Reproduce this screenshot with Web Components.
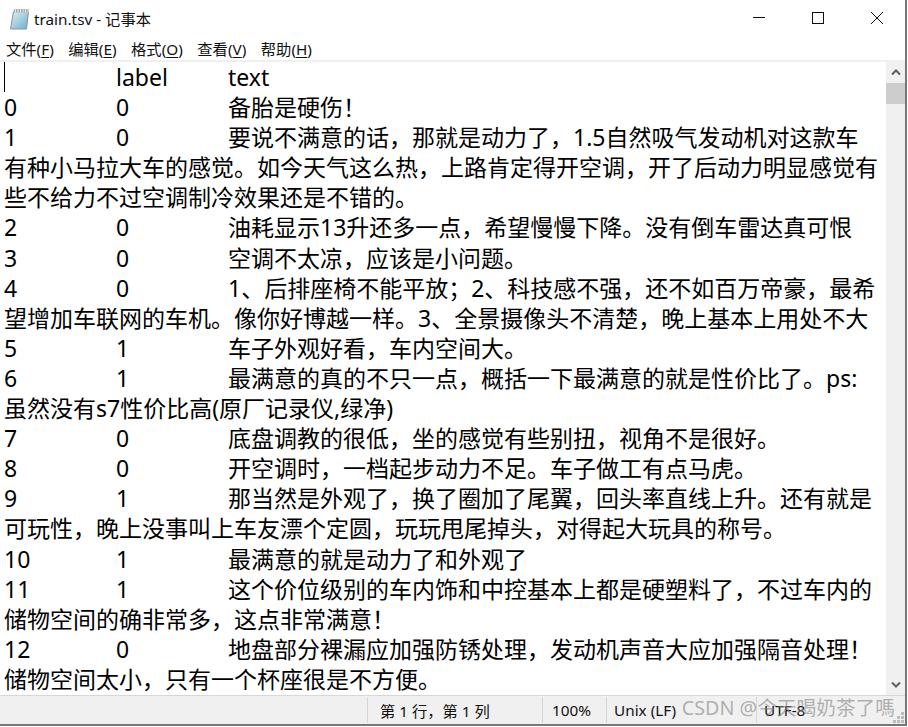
<!DOCTYPE html>
<html>
<head>
<meta charset="utf-8">
<title>train.tsv - 记事本</title>
<style>
  html, body { margin: 0; padding: 0; background: #fff; }
</style>
</head>
<body>
<note-window>
  <note-titlebar>train.tsv - 记事本</note-titlebar>
  <note-menubar>
    <note-menu key="F">文件</note-menu>
    <note-menu key="E">编辑</note-menu>
    <note-menu key="O">格式</note-menu>
    <note-menu key="V">查看</note-menu>
    <note-menu key="H">帮助</note-menu>
  </note-menubar>
  <note-editor>
    <div>&#9;label&#9;text</div>
    <div>0&#9;0&#9;备胎是硬伤！</div>
    <div>1&#9;0&#9;要说不满意的话，那就是动力了，1.5自然吸气发动机对这款车</div>
    <div>有种小马拉大车的感觉。如今天气这么热，上路肯定得开空调，开了后动力明显感觉有</div>
    <div>些不给力不过空调制冷效果还是不错的。</div>
    <div>2&#9;0&#9;油耗显示13升还多一点，希望慢慢下降。没有倒车雷达真可恨</div>
    <div>3&#9;0&#9;空调不太凉，应该是小问题。</div>
    <div>4&#9;0&#9;1、后排座椅不能平放；2、科技感不强，还不如百万帝豪，最希</div>
    <div>望增加车联网的车机。像你好博越一样。3、全景摄像头不清楚，晚上基本上用处不大</div>
    <div>5&#9;1&#9;车子外观好看，车内空间大。</div>
    <div>6&#9;1&#9;最满意的真的不只一点，概括一下最满意的就是性价比了。ps:</div>
    <div>虽然没有s7性价比高(原厂记录仪,绿净)</div>
    <div>7&#9;0&#9;底盘调教的很低，坐的感觉有些别扭，视角不是很好。</div>
    <div>8&#9;0&#9;开空调时，一档起步动力不足。车子做工有点马虎。</div>
    <div>9&#9;1&#9;那当然是外观了，换了圈加了尾翼，回头率直线上升。还有就是</div>
    <div>可玩性，晚上没事叫上车友漂个定圆，玩玩甩尾掉头，对得起大玩具的称号。</div>
    <div>10&#9;1&#9;最满意的就是动力了和外观了</div>
    <div>11&#9;1&#9;这个价位级别的车内饰和中控基本上都是硬塑料了，不过车内的</div>
    <div>储物空间的确非常多，这点非常满意！</div>
    <div>12&#9;0&#9;地盘部分裸漏应加强防锈处理，发动机声音大应加强隔音处理！</div>
    <div>储物空间太小，只有一个杯座很是不方便。</div>
  </note-editor>
  <note-statusbar>
    <span slot="pos">第 1 行，第 1 列</span>
    <span slot="zoom">100%</span>
    <span slot="eol">Unix (LF)</span>
    <span slot="enc">UTF-8</span>
  </note-statusbar>
  <note-watermark>CSDN @今天喝奶茶了嗎</note-watermark>
</note-window>

<script>
const FONT_UI = '"Noto Sans", "Noto Sans CJK SC", sans-serif';

class NoteWindow extends HTMLElement {
  constructor() {
    super();
    this.attachShadow({ mode: 'open' }).innerHTML = `
      <style>
        :host {
          display: flex;
          flex-direction: column;
          position: relative;
          box-sizing: border-box;
          width: 907px;
          height: 726px;
          overflow: hidden;
          background: #fff;
          border-right: 2px solid #777;
          border-bottom: 2px solid #777;
        }
      </style>
      <slot></slot>`;
  }
}

class NoteTitlebar extends HTMLElement {
  constructor() {
    super();
    this.attachShadow({ mode: 'open' }).innerHTML = `
      <style>
        :host {
          display: flex;
          align-items: center;
          height: 36px;
          flex: none;
          font: 15.3px ${FONT_UI};
          color: #111;
        }
        .icon { width: 22px; height: 24px; margin: 0 3.5px 0 8.5px; flex: none; }
        .title { flex: 1; white-space: nowrap; }
        .btns { display: flex; align-self: stretch; margin-right: -1px; }
        .btn { width: 59px; display: flex; align-items: center; justify-content: center; }
      </style>
      <svg class="icon" viewBox="0 0 22 24">
        <defs>
          <linearGradient id="pad" x1="0" y1="0" x2="1" y2="1">
            <stop offset="0" stop-color="#dff1f8"/>
            <stop offset="1" stop-color="#69aecb"/>
          </linearGradient>
        </defs>
        <path d="M4.5 5.5 H19.5 L17.5 23 H1.5 Z" fill="url(#pad)" stroke="#7d97a3"/>
        <path d="M5 3 H20 V6.5 H4.5 Z" fill="#a4adb2"/>
        <path d="M6.5 2.5v4M9 2.5v4M11.5 2.5v4M14 2.5v4M16.5 2.5v4M19 2.5v4" stroke="#e8e8e8"/>
      </svg>
      <span class="title"><slot></slot></span>
      <div class="btns">
        <div class="btn"><svg width="14" height="14" viewBox="0 0 14 14"><path d="M1 6.5H13" stroke="#111" fill="none"/></svg></div>
        <div class="btn"><svg width="14" height="14" viewBox="0 0 14 14"><rect x="1.5" y="1.5" width="11" height="11" stroke="#111" fill="none"/></svg></div>
        <div class="btn"><svg width="14" height="14" viewBox="0 0 14 14"><path d="M1 1L13 13M13 1L1 13" stroke="#111" fill="none"/></svg></div>
      </div>`;
  }
}

class NoteMenubar extends HTMLElement {
  constructor() {
    super();
    this.attachShadow({ mode: 'open' }).innerHTML = `
      <style>
        :host {
          display: flex;
          align-items: center;
          gap: 14.5px;
          height: 24px;
          flex: none;
          padding-left: 6px;
          font: 15.3px ${FONT_UI};
          color: #111;
        }
      </style>
      <slot></slot>`;
  }
}

class NoteMenu extends HTMLElement {
  constructor() {
    super();
    const key = this.getAttribute('key');
    this.attachShadow({ mode: 'open' }).innerHTML = `
      <style>
        :host { display: inline-block; white-space: nowrap; }
        u { text-underline-offset: 2px; }
      </style>
      <slot></slot>(<u>${key}</u>)`;
  }
}

class NoteEditor extends HTMLElement {
  constructor() {
    super();
    this.attachShadow({ mode: 'open' }).innerHTML = `
      <style>
        :host {
          display: flex;
          flex: 1;
          min-height: 0;
          border-top: 2px solid #f0f0f0;
        }
        .text {
          flex: 1;
          position: relative;
          padding-left: 4px;
          overflow: hidden;
          font: 23px/30.1px "Noto Sans", "Noto Sans CJK SC", sans-serif;
          color: #000;
        }
        ::slotted(div) { height: 30.1px; white-space: pre; tab-size: 112px; }
        .caret { position: absolute; left: 4px; top: 0; width: 1px; height: 30px; background: #000; }
        .track {
          flex: none;
          width: 19px;
          display: flex;
          flex-direction: column;
          background: #f0f0f0;
        }
        .arrow { height: 21px; display: flex; align-items: center; justify-content: center; }
        .thumb { height: 21px; background: #cdcdcd; }
        .gap { flex: 1; }
      </style>
      <div class="text"><div class="caret"></div><slot></slot></div>
      <div class="track">
        <div class="arrow"><svg width="10" height="7" viewBox="0 0 10 7"><path d="M1 5.5L5 1.5L9 5.5" stroke="#606060" stroke-width="2" fill="none"/></svg></div>
        <div class="thumb"></div>
        <div class="gap"></div>
        <div class="arrow"><svg width="10" height="7" viewBox="0 0 10 7"><path d="M1 1.5L5 5.5L9 1.5" stroke="#606060" stroke-width="2" fill="none"/></svg></div>
      </div>`;
  }
}

class NoteStatusbar extends HTMLElement {
  constructor() {
    super();
    this.attachShadow({ mode: 'open' }).innerHTML = `
      <style>
        :host {
          display: flex;
          flex: none;
          position: relative;
          height: 29px;
          background: #f0f0f0;
          border-top: 1px solid #d7d7d7;
          font: 15.3px ${FONT_UI};
          color: #111;
          box-sizing: border-box;
        }
        .fill { width: 367px; flex: none; }
        .cell {
          flex: none;
          box-sizing: border-box;
          border-left: 1px solid #d7d7d7;
          margin: 1px 0;
          padding-left: 12px;
          display: flex;
          align-items: center;
          white-space: nowrap;
        }
        .pos { width: 175px; }
        .zoom { width: 64px; padding-left: 9px; }
        .eol { width: 150px; padding-left: 7px; }
        .enc { flex: 1; padding-left: 7px; }
        .grip { position: absolute; right: 0; bottom: 0; }
      </style>
      <div class="fill"></div>
      <div class="cell pos"><slot name="pos"></slot></div>
      <div class="cell zoom"><slot name="zoom"></slot></div>
      <div class="cell eol"><slot name="eol"></slot></div>
      <div class="cell enc"><slot name="enc"></slot></div>
      <svg class="grip" width="12" height="12" viewBox="0 0 12 12" fill="#bcbcbc">
        <rect x="8" y="0" width="3" height="3"/>
        <rect x="4" y="4" width="3" height="3"/><rect x="8" y="4" width="3" height="3"/>
        <rect x="0" y="8" width="3" height="3"/><rect x="4" y="8" width="3" height="3"/><rect x="8" y="8" width="3" height="3"/>
      </svg>`;
  }
}

class NoteWatermark extends HTMLElement {
  constructor() {
    super();
    this.attachShadow({ mode: 'open' }).innerHTML = `
      <style>
        :host {
          position: absolute;
          right: 10px;
          bottom: 3px;
          font: 19.7px "Noto Sans", "Noto Sans CJK SC", sans-serif;
          color: rgba(130, 130, 130, 0.6);
          white-space: nowrap;
        }
      </style>
      <slot></slot>`;
  }
}

customElements.define('note-window', NoteWindow);
customElements.define('note-titlebar', NoteTitlebar);
customElements.define('note-menubar', NoteMenubar);
customElements.define('note-menu', NoteMenu);
customElements.define('note-editor', NoteEditor);
customElements.define('note-statusbar', NoteStatusbar);
customElements.define('note-watermark', NoteWatermark);
</script>
</body>
</html>
